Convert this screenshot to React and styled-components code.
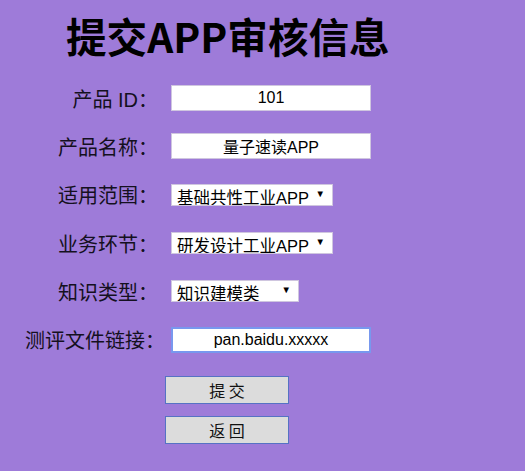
import React from "react";
import styled, { createGlobalStyle } from "styled-components";

const GlobalStyle = createGlobalStyle`
  html, body {
    margin: 0;
    padding: 0;
    background: #9e7bd9;
  }
  body {
    font-family: "Liberation Sans", "Noto Sans CJK SC", sans-serif;
    color: #111;
  }
`;

const fields = [
  { label: "产品 ID：", kind: "input", value: "101" },
  { label: "产品名称：", kind: "input", value: "量子速读APP" },
  { label: "适用范围：", kind: "select", value: "基础共性工业APP", width: 162 },
  { label: "业务环节：", kind: "select", value: "研发设计工业APP", width: 162 },
  { label: "知识类型：", kind: "select", value: "知识建模类", width: 128 },
  { label: "测评文件链接：", kind: "input", value: "pan.baidu.xxxxx", focused: true },
];

function App() {
  return (
    <>
      <GlobalStyle />
      <Page>
        <Title>提交APP审核信息</Title>
        <Form>
          {fields.map((f) => (
            <Row key={f.label}>
              <Label>{f.label}</Label>
              {f.kind === "input" ? (
                <TextInput defaultValue={f.value} $focused={f.focused} />
              ) : (
                <SelectWrap $width={f.width}>
                  <Select defaultValue={f.value}>
                    <option>{f.value}</option>
                  </Select>
                  <Arrow>▼</Arrow>
                </SelectWrap>
              )}
            </Row>
          ))}
          <Buttons>
            <Button>提 交</Button>
            <Button>返 回</Button>
          </Buttons>
        </Form>
      </Page>
    </>
  );
}

export default App;

const Page = styled.div`
  width: 525px;
  height: 471px;
  overflow: hidden;
`;

const Title = styled.h1`
  margin: 0;
  padding: 10px 0 0 66px;
  font-family: "Noto Sans CJK SC", sans-serif;
  font-weight: 700;
  font-size: 40.6px;
  line-height: 52px;
  color: #000;
`;

const Form = styled.div`
  padding-top: 12px;
  padding-left: 25px;
`;

const Row = styled.div`
  display: flex;
  align-items: center;
  height: 48.3px;
`;

const Label = styled.label`
  width: 133px;
  flex: none;
  text-align: right;
  white-space: nowrap;
  font-size: 20px;
  margin-right: 13px;
  color: #141020;
`;

const TextInput = styled.input`
  box-sizing: border-box;
  width: 200px;
  height: 26px;
  border: ${(p) => (p.$focused ? "2px solid #7898ee" : "1px solid #cfc6df")};
  background: #fff;
  text-align: center;
  font-family: "Liberation Sans", "Noto Sans CJK SC", sans-serif;
  font-size: 16px;
  color: #000;
  padding: 0;
  outline: none;
`;

const SelectWrap = styled.div`
  position: relative;
  width: ${(p) => p.$width}px;
  height: 22px;
`;

const Select = styled.select`
  appearance: none;
  box-sizing: border-box;
  width: 100%;
  height: 100%;
  border: 1px solid #cfc6df;
  border-radius: 0;
  background: #fff;
  padding: 3px 0 0 5px;
  font-family: "Liberation Sans", "Noto Sans CJK SC", sans-serif;
  font-size: 16.5px;
  line-height: 20px;
  color: #000;
  outline: none;
  overflow: hidden;
`;

const Arrow = styled.span`
  position: absolute;
  right: 8px;
  top: 4px;
  font-size: 9.5px;
  color: #000;
  pointer-events: none;
`;

const Buttons = styled.div`
  display: flex;
  flex-direction: column;
  gap: 12px;
  padding: 12px 0 0 140px;
`;

const Button = styled.button`
  box-sizing: border-box;
  width: 124px;
  height: 28px;
  border: 1px solid #5672c4;
  background: #dcdcdc;
  font-family: "Noto Sans CJK SC", sans-serif;
  font-size: 16px;
  color: #111;
  padding: 0;
  cursor: pointer;
`;
